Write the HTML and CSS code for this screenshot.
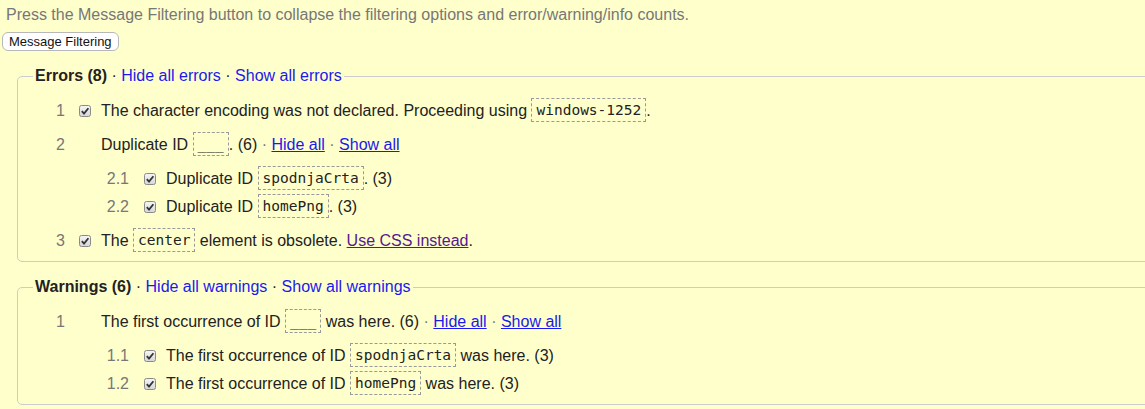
FILE: index.html
```html
<!DOCTYPE html>
<html>
<head>
<meta charset="utf-8">
<link rel="stylesheet" href="styles.css">
</head>
<body>
<p class="intro">Press the Message Filtering button to collapse the filtering options and error/warning/info counts.</p>
<button class="filter-btn">Message Filtering</button>

<fieldset class="group">
  <legend class="group-title"><strong>Errors (8)</strong> · <a href="#">Hide all errors</a> · <a href="#">Show all errors</a></legend>
  <ol class="msgs">
    <li class="msg">
      <div class="row">
        <span class="num">1</span>
        <span class="chk"><svg width="12" height="12" viewBox="0 0 12 12"><defs><linearGradient id="g1" x1="0" y1="0" x2="0" y2="1"><stop offset="0" stop-color="#f6f6f6"/><stop offset="1" stop-color="#d6d6d6"/></linearGradient></defs><rect x="0.5" y="0.5" width="11" height="11" rx="2" fill="url(#g1)" stroke="#8a8a8a"/><path d="M2.8 6.2 L5 8.6 L9.4 3.2" fill="none" stroke="#333" stroke-width="1.8"/></svg></span>
        <span class="text">The character encoding was not declared. Proceeding using <code>windows-1252</code>.</span>
      </div>
    </li>
    <li class="msg">
      <div class="row">
        <span class="num">2</span>
        <span class="chk"></span>
        <span class="text">Duplicate ID <code>___</code>. (6) <span class="sep">·</span> <a class="ul" href="#">Hide all</a> <span class="sep">·</span> <a class="ul" href="#">Show all</a></span>
      </div>
      <ol class="msgs sub">
        <li class="msg">
          <div class="row">
            <span class="num">2.1</span>
            <span class="chk"><svg width="12" height="12" viewBox="0 0 12 12"><rect x="0.5" y="0.5" width="11" height="11" rx="2" fill="url(#g1)" stroke="#8a8a8a"/><path d="M2.8 6.2 L5 8.6 L9.4 3.2" fill="none" stroke="#333" stroke-width="1.8"/></svg></span>
            <span class="text">Duplicate ID <code>spodnjaCrta</code>. (3)</span>
          </div>
        </li>
        <li class="msg">
          <div class="row">
            <span class="num">2.2</span>
            <span class="chk"><svg width="12" height="12" viewBox="0 0 12 12"><rect x="0.5" y="0.5" width="11" height="11" rx="2" fill="url(#g1)" stroke="#8a8a8a"/><path d="M2.8 6.2 L5 8.6 L9.4 3.2" fill="none" stroke="#333" stroke-width="1.8"/></svg></span>
            <span class="text">Duplicate ID <code>homePng</code>. (3)</span>
          </div>
        </li>
      </ol>
    </li>
    <li class="msg">
      <div class="row">
        <span class="num">3</span>
        <span class="chk"><svg width="12" height="12" viewBox="0 0 12 12"><rect x="0.5" y="0.5" width="11" height="11" rx="2" fill="url(#g1)" stroke="#8a8a8a"/><path d="M2.8 6.2 L5 8.6 L9.4 3.2" fill="none" stroke="#333" stroke-width="1.8"/></svg></span>
        <span class="text">The <code>center</code> element is obsolete. <a class="ul visited" href="#">Use CSS instead</a>.</span>
      </div>
    </li>
  </ol>
</fieldset>

<fieldset class="group">
  <legend class="group-title"><strong>Warnings (6)</strong> · <a href="#">Hide all warnings</a> · <a href="#">Show all warnings</a></legend>
  <ol class="msgs">
    <li class="msg">
      <div class="row">
        <span class="num">1</span>
        <span class="chk"></span>
        <span class="text">The first occurrence of ID <code>___</code> was here. (6) <span class="sep">·</span> <a class="ul" href="#">Hide all</a> <span class="sep">·</span> <a class="ul" href="#">Show all</a></span>
      </div>
      <ol class="msgs sub">
        <li class="msg">
          <div class="row">
            <span class="num">1.1</span>
            <span class="chk"><svg width="12" height="12" viewBox="0 0 12 12"><rect x="0.5" y="0.5" width="11" height="11" rx="2" fill="url(#g1)" stroke="#8a8a8a"/><path d="M2.8 6.2 L5 8.6 L9.4 3.2" fill="none" stroke="#333" stroke-width="1.8"/></svg></span>
            <span class="text">The first occurrence of ID <code>spodnjaCrta</code> was here. (3)</span>
          </div>
        </li>
        <li class="msg">
          <div class="row">
            <span class="num">1.2</span>
            <span class="chk"><svg width="12" height="12" viewBox="0 0 12 12"><rect x="0.5" y="0.5" width="11" height="11" rx="2" fill="url(#g1)" stroke="#8a8a8a"/><path d="M2.8 6.2 L5 8.6 L9.4 3.2" fill="none" stroke="#333" stroke-width="1.8"/></svg></span>
            <span class="text">The first occurrence of ID <code>homePng</code> was here. (3)</span>
          </div>
        </li>
      </ol>
    </li>
  </ol>
</fieldset>
</body>
</html>
```
FILE: styles.css
```css
html, body {
  margin: 0;
  padding: 0;
  overflow: hidden;
}
body {
  background: #ffffcc;
  font-family: "Liberation Sans", Arial, sans-serif;
  font-size: 16px;
  color: #222;
}
.intro {
  margin: 5px 0 0 6px;
  line-height: 20px;
  color: #777;
}
.filter-btn {
  display: block;
  margin: 7px 0 0 2px;
  height: 19px;
  padding: 0 6px;
  font-family: "Liberation Sans", Arial, sans-serif;
  font-size: 13px;
  line-height: 16px;
  color: #111;
  background: #fff;
  border: 1px solid #b8b8b8;
  border-radius: 6px;
}
.group {
  margin: 15px -40px 0 17px;
  padding: 13px 0 8px 0;
  border: 1px solid #cccccc;
  border-radius: 5px;
}
.group + .group {
  margin-top: 15px;
}
.group-title {
  margin-left: 15px;
  padding: 0 2px;
  line-height: 20px;
  color: #222;
}
.group-title strong {
  font-weight: bold;
}
.group-title a {
  color: #1a1aee;
  text-decoration: none;
}
.msgs {
  list-style: none;
  margin: 0;
  padding: 0;
}
.msg + .msg {
  margin-top: 10px;
}
.sub {
  margin-top: 10px;
}
.sub .msg + .msg {
  margin-top: 4px;
}
.row {
  display: flex;
  align-items: center;
  height: 24px;
  line-height: 24px;
}
.num {
  width: 47px;
  flex: none;
  text-align: right;
  color: #777;
}
.sub .num {
  width: 28px;
}
.chk {
  flex: none;
  width: 12px;
  height: 12px;
  margin: 0 10px 0 14px;
  display: flex;
}
.sub .chk {
  margin-left: 15px;
}
.text {
  white-space: nowrap;
}
.sub {
  margin-left: 83px;
}
code {
  display: inline-block;
  vertical-align: middle;
  box-sizing: border-box;
  height: 24px;
  line-height: 22px;
  padding: 0 4px;
  border: 1px dashed #999;
  font-family: "DejaVu Sans Mono", "Liberation Mono", monospace;
  font-size: 14.5px;
  color: #222;
  position: relative;
  top: -1px;
}
.sep {
  color: #777;
}
a.ul {
  color: #1a1aee;
  text-decoration: underline;
}
a.visited {
  color: #551a8b;
}
```
